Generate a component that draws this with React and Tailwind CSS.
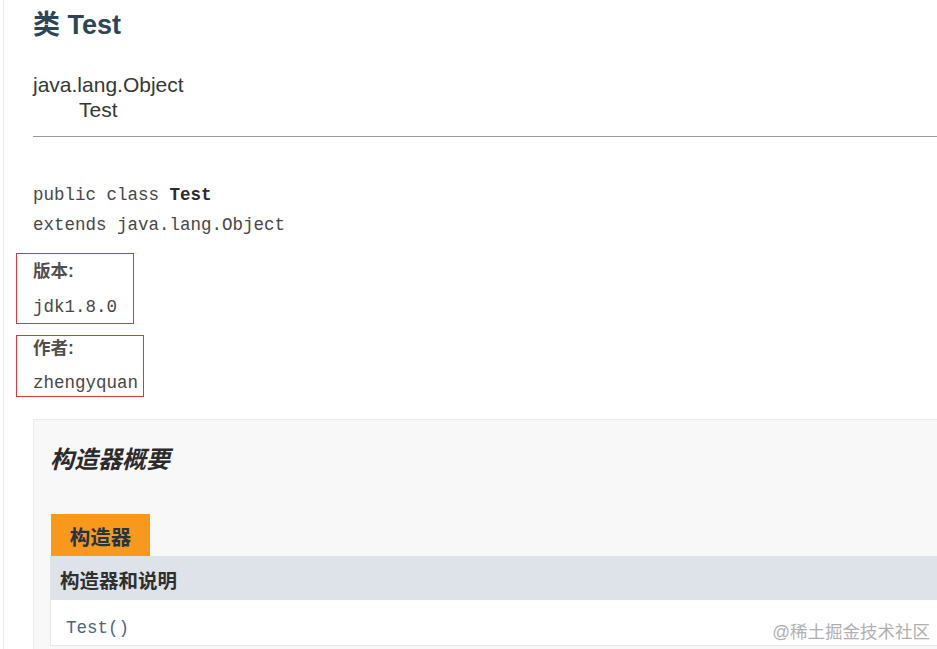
export default function App() {
  const sans = { fontFamily: '"Liberation Sans", "Noto Sans CJK SC", sans-serif' };
  const mono = { fontFamily: '"Liberation Mono", "Noto Sans CJK SC", monospace' };

  return (
    <div className="h-[649px] w-[937px] overflow-hidden bg-white" style={sans}>
      <div className="ml-[3px] h-full border-l border-[#ececec] pl-[29px]">
        {/* title */}
        <h1 className="pt-[9px] text-[27px] font-bold leading-[32px] text-[#2c4557]">类 Test</h1>

        {/* inheritance */}
        <div className="mt-[31px] text-[21px] leading-[25px] text-[#353833]">
          <div>java.lang.Object</div>
          <div className="pl-[46px]">Test</div>
        </div>
        <hr className="mt-[14px] border-t border-[#9a9a9a]" />

        {/* class signature */}
        <div className="mt-[43px] text-[17.5px] leading-[30px] text-[#474747]" style={mono}>
          <div>
            public class <span className="font-bold text-[#2b2b2b]">Test</span>
          </div>
          <div>extends java.lang.Object</div>
        </div>

        {/* tags */}
        <div className="ml-[-17px] mt-[13px] h-[71px] w-[118px] border border-[#d9393e] pl-[16px] pt-[6px]">
          <div className="text-[17.5px] font-bold leading-[22px] text-[#4e4e4e]">版本:</div>
          <div className="mt-[13px] text-[17.5px] leading-[24px] text-[#474747]" style={mono}>jdk1.8.0</div>
        </div>
        <div className="ml-[-17px] mt-[11px] h-[62px] w-[128px] border border-[#d9393e] pl-[16px]">
          <div className="mt-[1px] text-[17.5px] font-bold leading-[22px] text-[#4e4e4e]">作者:</div>
          <div className="mt-[12px] text-[17.5px] leading-[24px] text-[#474747]" style={mono}>zhengyquan</div>
        </div>

        {/* constructor summary */}
        <div className="mt-[22px] border-l border-t border-[#ececec] bg-[#f8f8f8] pl-[16px] pb-[3px]">
          <h3 className="pt-[25px] text-[24px] font-bold italic leading-[30px] text-[#2b2b2b]">构造器概要</h3>
          <div className="mt-[39px]">
            <div className="ml-[1px] flex h-[42px] w-[99px] items-center justify-center bg-[#f8981d] pt-[6px] text-[20.5px] font-bold text-[#253441]">
              构造器
            </div>
            <div className="flex h-[44px] items-center bg-[#dee3e9] pl-[10px] pt-[7px] text-[19.5px] font-bold text-[#2f2f2f]">
              构造器和说明
            </div>
            <div className="relative flex h-[46px] items-center border-b border-l border-[#e6e6e6] bg-white pl-[15px] pt-[12px]">
              <span className="text-[17.5px] text-[#4a6782]" style={mono}>Test()</span>
              <span className="absolute right-[7px] top-[19px] text-[17.5px] text-[#b0b0b0]">@稀土掘金技术社区</span>
            </div>
          </div>
        </div>
      </div>
    </div>
  );
}
